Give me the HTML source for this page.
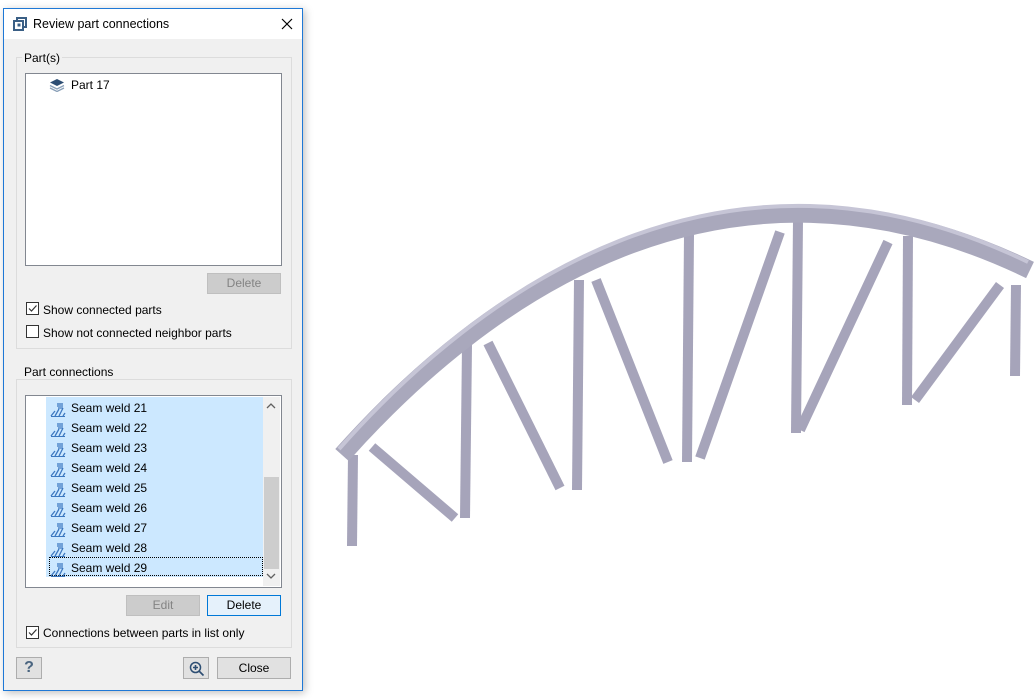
<!DOCTYPE html>
<html><head><style>
*{box-sizing:border-box;margin:0;padding:0}
body{width:1036px;height:700px;background:#fff;position:relative;overflow:hidden;font-family:"Liberation Sans",sans-serif;font-size:12px;color:#000}
.a{position:absolute}
.dlg{left:3px;top:8px;width:300px;height:683px;border:1px solid #1e78d6;background:#f0f0f0;box-shadow:2px 2px 8px rgba(0,0,0,.25)}
.title{left:0;top:0;width:298px;height:30px;background:#fff}
.gb{border:1px solid #dcdcdc}
.lbl{background:#f0f0f0;padding:0 2px}
.list{background:#fff;border:1px solid #828790}
.btn{border:1px solid #adadad;background:#e1e1e1;text-align:center;line-height:19px}
.dis{background:#cccccc;border-color:#bfbfbf;color:#838383}
.cb{width:13px;height:13px;border:1px solid #333;background:#fff}
</style></head><body>
<div class="a dlg">
 <div class="a title"></div>
 <svg class="a" style="left:9px;top:8px" width="14" height="14"><rect x="4" y="1" width="9" height="9" fill="none" stroke="#3a5f85" stroke-width="2"/><rect x="1" y="4" width="9" height="9" fill="#fff" stroke="#3a5f85" stroke-width="2"/><rect x="4.5" y="6.5" width="3" height="3" fill="#3a5f85"/></svg>
 <div class="a" style="left:29px;top:8px;font-size:12.5px">Review part connections</div>
 <svg class="a" style="left:277px;top:9px" width="12" height="12"><path d="M1 1L11 11M11 1L1 11" stroke="#000" stroke-width="1.2"/></svg>

 <div class="a gb" style="left:12px;top:48px;width:276px;height:292px"></div>
 <div class="a lbl" style="left:18px;top:42px">Part(s)</div>
 <div class="a list" style="left:21px;top:64px;width:257px;height:193px"></div>
 <svg class="a" style="left:45px;top:69px" width="16" height="14"><path d="M8 1L15 4.5L8 8L1 4.5Z" fill="#2d4e73"/><path d="M1 7.5L8 11L15 7.5M1 10L8 13.5L15 10" fill="none" stroke="#8aa0b8" stroke-width="1.3"/></svg>
 <div class="a" style="left:67px;top:69px">Part 17</div>
 <div class="a btn dis" style="left:203px;top:264px;width:74px;height:21px">Delete</div>
 <div class="a cb" style="left:22px;top:293px"></div>
 <svg class="a" style="left:23px;top:294px" width="11" height="11"><path d="M2 5.5L4.5 8L9.5 2.5" fill="none" stroke="#333" stroke-width="1.2"/></svg>
 <div class="a" style="left:39px;top:294px">Show connected parts</div>
 <div class="a cb" style="left:22px;top:316px"></div>
 <div class="a" style="left:39px;top:317px">Show not connected neighbor parts</div>

 <div class="a gb" style="left:12px;top:370px;width:276px;height:269px"></div>
 <div class="a lbl" style="left:18px;top:356px">Part connections</div>
 <div class="a list" style="left:21px;top:386px;width:257px;height:193px"></div>
 <div class="a" style="left:42px;top:388px;width:218px;height:180px;background:#cce8ff"></div>
 <div class="a" style="left:259px;top:388px;width:17px;height:189px;background:#f0f0f0"></div>
 <div class="a" style="left:260px;top:468px;width:15px;height:92px;background:#cdcdcd"></div>
 <svg class="a" style="left:262px;top:393px" width="10" height="8"><path d="M1 6L5 2L9 6" fill="none" stroke="#606060" stroke-width="1.3"/></svg>
 <svg class="a" style="left:262px;top:563px" width="10" height="8"><path d="M1 2L5 6L9 2" fill="none" stroke="#606060" stroke-width="1.3"/></svg>
 <div class="a" style="left:45px;top:548px;width:214px;height:19px;border:1px dotted #000"></div>
 <div id="rows"></div>
 <div class="a btn dis" style="left:122px;top:586px;width:74px;height:21px">Edit</div>
 <div class="a btn" style="left:203px;top:586px;width:74px;height:21px;border-color:#0078d7;background:#e5f1fb">Delete</div>
 <div class="a cb" style="left:22px;top:617px"></div>
 <svg class="a" style="left:23px;top:618px" width="11" height="11"><path d="M2 5.5L4.5 8L9.5 2.5" fill="none" stroke="#333" stroke-width="1.2"/></svg>
 <div class="a" style="left:39px;top:617px">Connections between parts in list only</div>

 <div class="a btn" style="left:12px;top:648px;width:26px;height:22px;font-weight:bold;font-size:16px;color:#4a6580;line-height:20px">?</div>
 <div class="a btn" style="left:179px;top:648px;width:26px;height:22px"></div>
 <svg class="a" style="left:185px;top:652px" width="16" height="16"><circle cx="6.5" cy="6.5" r="5" fill="none" stroke="#2d4e73" stroke-width="1.5"/><path d="M6.5 4v5M4 6.5h5M10 10l4.5 4.5" stroke="#2d4e73" stroke-width="1.6"/></svg>
 <div class="a btn" style="left:213px;top:648px;width:74px;height:22px;line-height:20px">Close</div>
</div>
<script>
var h='';for(var i=0;i<9;i++){var y=390+i*20;
h+='<svg class="a" style="left:46px;top:'+(y+3)+'px" width="16" height="15"><g fill="none" stroke="#3c78c0" stroke-width="1.3"><path d="M1 14L5 9M5 14L9 7M9 14L13 6M13 14L15 11"/><path d="M7 2h6M7 4h6M8 6h5"/></g><path d="M1 14.5h14" stroke="#3c78c0"/></svg><div class="a" style="left:67px;top:'+(y+2)+'px;line-height:14px">Seam weld '+(21+i)+'</div>';}
document.getElementById('rows').innerHTML=h;
</script>
<svg class="a" style="left:0;top:0" width="1036" height="700">
<g stroke="#a6a4ba" stroke-width="10" stroke-linecap="butt">
<line x1="353" y1="455" x2="352" y2="546"/>
<line x1="467" y1="345" x2="465" y2="518"/>
<line x1="579" y1="280" x2="577" y2="490"/>
<line x1="689" y1="235" x2="687" y2="462"/>
<line x1="798" y1="220" x2="796" y2="433"/>
<line x1="908" y1="236" x2="907" y2="405"/>
<line x1="1016" y1="285" x2="1015" y2="376"/>
<line x1="372" y1="447" x2="455" y2="518"/>
<line x1="488" y1="343" x2="560" y2="488"/>
<line x1="596" y1="280" x2="668" y2="462"/>
<line x1="780" y1="232" x2="700" y2="458"/>
<line x1="888" y1="242" x2="800" y2="430"/>
<line x1="1000" y1="285" x2="915" y2="400"/>
</g>
<path d="M342 455 C 480 300 720 120 1030 270" fill="none" stroke="#a9a8bc" stroke-width="18"/>
<path d="M339 449 C 477 293 720 112 1028 262" fill="none" stroke="#c6c5d6" stroke-width="4"/>
</svg>
</body></html>
